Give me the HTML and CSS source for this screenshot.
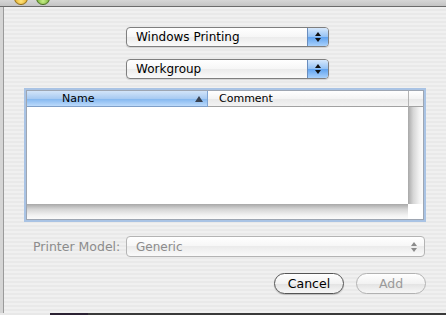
FILE: index.html
```html
<!DOCTYPE html>
<html>
<head>
  <title>Browser</title>
  <link rel="stylesheet" href="styles.css">
</head>
<body>
  <div class="screen">
    <div class="titlebar">
      <span class="light yellow"></span>
      <span class="light green"></span>
      <span class="title">Browser</span>
    </div>

    <div class="window">
      <div class="behind"></div>
      <div class="sheet">
        <div class="popup first">
          <span class="popup-label">Windows Printing</span>
          <span class="arrows"><i class="up"></i><i class="down"></i></span>
        </div>
        <div class="popup second">
          <span class="popup-label">Workgroup</span>
          <span class="arrows"><i class="up"></i><i class="down"></i></span>
        </div>

        <div class="table">
          <div class="grid">
            <div class="head">
              <div class="col-name">Name <span class="sort"></span></div>
              <div class="col-comment">Comment</div>
            </div>
            <div class="head-corner"></div>
            <div class="rows"></div>
            <div class="vscroll"></div>
            <div class="hscroll"></div>
            <div class="corner"></div>
          </div>
        </div>

        <div class="model-row">
          <span class="model-label">Printer Model:</span>
          <div class="popup disabled">
            <span class="popup-label">Generic</span>
            <span class="arrows"><i class="up"></i><i class="down"></i></span>
          </div>
        </div>

        <div class="buttons">
          <button class="btn">Cancel</button>
          <button class="btn off">Add</button>
        </div>
      </div>
    </div>

    <div class="bottom"></div>
  </div>
</body>
</html>
```

FILE: styles.css
```css
body {
  margin: 0;
  font-family: "DejaVu Sans", sans-serif;
  font-size: 12px;
  color: #000;
}
.screen {
  height: 315px;
  width: 446px;
  display: flex;
  flex-direction: column;
  overflow: hidden;
}

/* window title bar, mostly scrolled off the top */
.titlebar {
  flex: none;
  height: 6px;
  display: flex;
  overflow: hidden;
  background: linear-gradient(#d6d6d6, #c4c4c4);
  border-bottom: 1px solid #6b6b6b;
}
.light {
  flex: none;
  width: 12px;
  height: 12px;
  margin-top: -9px;
  border-radius: 50%;
  border: 1px solid rgba(0,0,0,0.35);
}
.yellow {
  margin-left: 14px;
  background: radial-gradient(circle at 50% 75%, #ffe680, #e3a51a 70%);
}
.green {
  margin-left: 8px;
  background: radial-gradient(circle at 50% 75%, #c8ef8a, #6aa72c 70%);
}
.title {
  margin-left: 152px;
  margin-top: -11px;
  font-size: 13px;
  line-height: 13px;
  color: #222;
}

.window {
  flex: 1;
  display: flex;
  min-height: 0;
}
.behind {
  width: 3px;
  background: #d5d5d5;
  border-right: 1px solid #9a9a9a;
}
.sheet {
  flex: 1;
  display: flex;
  flex-direction: column;
  background: repeating-linear-gradient(#f0f0f0 0 2px, #e9e9e9 2px 4px);
}

/* popup menus */
.popup {
  box-sizing: border-box;
  width: 203px;
  height: 20px;
  display: flex;
  align-items: center;
  border: 1px solid #7f7f7f;
  border-radius: 4px;
  background: linear-gradient(#ffffff, #f6f6f6 50%, #ebebeb 50%, #fafafa);
  box-shadow: 0 1px 1px rgba(0,0,0,0.12);
}
.popup.first {
  margin: 20px 0 0 122px;
}
.popup.second {
  margin: 12px 0 0 122px;
}
.popup-label {
  flex: 1;
  padding-left: 9px;
  white-space: nowrap;
}
.arrows {
  align-self: stretch;
  width: 20px;
  display: flex;
  flex-direction: column;
  align-items: center;
  justify-content: center;
  gap: 2px;
  background: linear-gradient(#d6e8fc, #93c1f4 50%, #5f a2ef 50%, #a9d1fb);
  background: linear-gradient(#d6e8fc, #93c1f4 50%, #5fa2ef 50%, #a9d1fb);
  border-left: 1px solid #6a8dbd;
  border-radius: 0 3px 3px 0;
}
.arrows i {
  width: 0;
  height: 0;
  border-left: 3px solid transparent;
  border-right: 3px solid transparent;
}
.arrows .up {
  border-bottom: 4px solid #111;
}
.arrows .down {
  border-top: 4px solid #111;
}

/* list box */
.table {
  box-sizing: border-box;
  width: 402px;
  height: 134px;
  margin: 9px 0 0 20px;
  border: 2px solid #a9c3e4;
}
.grid {
  box-sizing: border-box;
  height: 100%;
  border: 1px solid #9ea6b2;
  display: grid;
  grid-template-columns: 1fr 15px;
  grid-template-rows: 16px 1fr 15px;
  background: #fff;
}
.head {
  display: flex;
  font-size: 11px;
}
.col-name {
  box-sizing: border-box;
  width: 181px;
  padding-left: 35px;
  display: flex;
  align-items: center;
  background: linear-gradient(#d2e4f9, #a9cbf2 50%, #80b5ef 50%, #bcdafb);
  border-bottom: 1px solid #7f9fc8;
  border-right: 1px solid #7fa4d3;
}
.sort {
  margin-left: auto;
  margin-right: 4px;
  width: 0;
  height: 0;
  border-left: 4px solid transparent;
  border-right: 4px solid transparent;
  border-bottom: 6px solid #3a4250;
}
.col-comment,
.head-corner {
  box-sizing: border-box;
  background: linear-gradient(#ffffff, #f4f4f4 50%, #e8e8e8 50%, #f3f3f3);
  border-bottom: 1px solid #a2a2a2;
}
.col-comment {
  flex: 1;
  padding-left: 11px;
  display: flex;
  align-items: center;
}
.head-corner {
  border-left: 1px solid #b3b3b3;
}
.vscroll {
  background: linear-gradient(to right, #a8a8a8, #d6d6d6 35%, #f2f2f2 75%, #fbfbfb);
}
.hscroll {
  background: linear-gradient(#a8a8a8, #d6d6d6 35%, #f2f2f2 75%, #fbfbfb);
}
.corner {
  background: #fff;
}

/* disabled printer model row */
.model-row {
  display: flex;
  align-items: center;
  margin-top: 14px;
  padding-left: 29px;
}
.model-label {
  width: 93px;
  color: #8c8c8c;
  font-size: 12.5px;
}
.popup.disabled {
  width: 299px;
  height: 21px;
  border-color: #b4b4b4;
  color: #8c8c8c;
  box-shadow: none;
}
.popup.disabled .arrows {
  background: none;
  border-left: none;
}
.popup.disabled .up {
  border-bottom-color: #8a8a8a;
}
.popup.disabled .down {
  border-top-color: #8a8a8a;
}

/* push buttons */
.buttons {
  display: flex;
  justify-content: flex-end;
  gap: 12px;
  margin-top: 16px;
  padding-right: 20px;
}
.btn {
  width: 70px;
  height: 21px;
  padding: 0;
  font-family: "DejaVu Sans", sans-serif;
  font-size: 12.5px;
  color: #000;
  border: 1px solid #555;
  border-radius: 11px;
  background: linear-gradient(#ffffff, #f2f2f2 50%, #e2e2e2 50%, #f7f7f7);
  box-shadow: 0 1px 1px rgba(0,0,0,0.2);
}
.btn.off {
  color: #9a9a9a;
  border-color: #b2b2b2;
  box-shadow: none;
}

.bottom {
  flex: none;
  height: 2px;
  background: linear-gradient(to right, #e8e8e8 0 50px, #2b2233 50px 88px, #3a3a3a 88px);
}
```
